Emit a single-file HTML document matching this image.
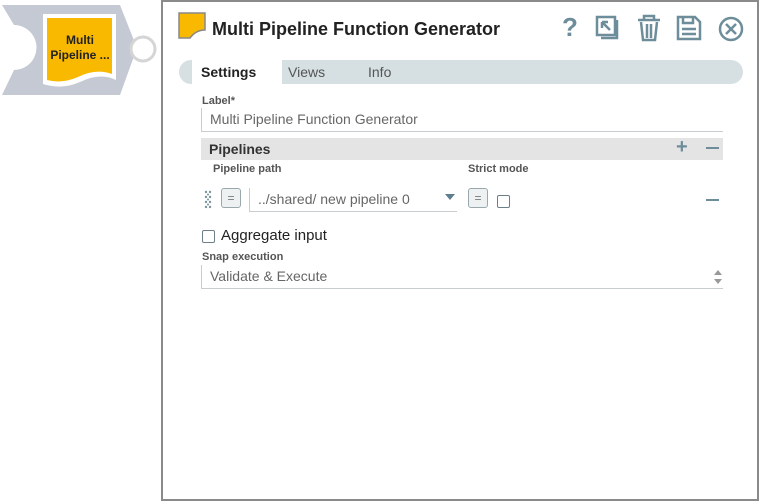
<!DOCTYPE html>
<html><head><style>
body{margin:0;width:762px;height:501px;background:#fff;position:relative;overflow:hidden;font-family:"Liberation Sans",sans-serif;}
.abs{position:absolute}
*{box-sizing:border-box}
.lbl{font-size:11px;font-weight:bold;color:#555}
.inp{border:1px solid #c8cdd0;border-top:none;border-right:none;font-size:14px;color:#666;}
.eq{border:1px solid #9aa7ad;border-radius:3px;background:#eef1f2;width:20px;height:20px;font-size:12px;color:#777;text-align:center;line-height:18px}
.cb{border:1px solid #6d7f88;border-radius:2px;width:13px;height:13px}
</style></head><body>
<svg class="abs" style="left:0;top:0" width="162" height="100">
<path d="M2 5 H120 L137 48 L120 95 H2 L14 70 A22 22 0 0 0 14 25 Z" fill="#c4c9d4"/>
<path d="M0 30 A18 18 0 0 1 0 66 Z" fill="#fff"/>
<path d="M43 14 H116 V80 Q100 72 80 82 Q62 90 43 84 Z" fill="#fff"/>
<path d="M47 18 H112 V74 Q96 68 78 77 Q62 84 47 80 Z" fill="#f9b900"/>
<circle cx="143" cy="49" r="12" fill="#fff" stroke="#d5d5d5" stroke-width="3"/>
<text x="80" y="44" font-size="12" font-weight="bold" text-anchor="middle" fill="#222" font-family="Liberation Sans">Multi</text>
<text x="80" y="59" font-size="12" font-weight="bold" text-anchor="middle" fill="#222" font-family="Liberation Sans">Pipeline ...</text>
</svg>
<div class="abs" style="left:161px;top:0;width:598px;height:501px;border:2px solid #8a8a8a;background:#fff"></div>
<svg class="abs" style="left:178px;top:12px" width="30" height="28"><path d="M1 1 H27 V18 Q18 18 12 26 H1 Z" fill="#f9b900" stroke="#888" stroke-width="1.5"/></svg>
<div class="abs" style="left:212px;top:19px;font-size:18px;font-weight:bold;color:#222">Multi Pipeline Function Generator</div>
<svg class="abs" style="left:555px;top:12px" width="195" height="32" fill="none" stroke="#6e8d9a" stroke-width="2.5">
<text x="7" y="24" font-size="26" font-weight="bold" fill="#6e8d9a" stroke="none" font-family="Liberation Sans">?</text>
<rect x="42" y="5" width="18" height="18"/><path d="M47 10 L55 18 M47 10 H53 M47 10 V16" /><path d="M62 8 V26 H46"/>
<path d="M83 8 H105 M89 8 V4 H99 V8 M86 10 L88 28 H100 L102 10 M92 12 V26 M96 12 V26"/>
<path d="M123 5 H140 L145 10 V27 H123 Z M128 5 V11 H138 V5 M127 17 H141 M127 22 H141"/>
<circle cx="176" cy="17" r="11"/><path d="M171 12 L181 22 M181 12 L171 22"/>
</svg>
<div class="abs" style="left:179px;top:60px;width:564px;height:24px;background:#d6e0e3;border-radius:12px"></div>
<div class="abs" style="left:192px;top:60px;width:90px;height:24px;background:#fff"></div>
<div class="abs" style="left:201px;top:64px;font-size:14px;font-weight:bold;color:#222">Settings</div>
<div class="abs" style="left:288px;top:64px;font-size:14px;color:#555">Views</div>
<div class="abs" style="left:368px;top:64px;font-size:14px;color:#555">Info</div>
<div class="abs lbl" style="left:202px;top:95px">Label*</div>
<div class="abs inp" style="left:201px;top:108px;width:522px;height:24px;padding-left:8px;line-height:22px">Multi Pipeline Function Generator</div>
<div class="abs" style="left:201px;top:138px;width:522px;height:22px;background:#e4e4e4"></div>
<div class="abs" style="left:209px;top:141px;font-size:14px;font-weight:bold;color:#333">Pipelines</div>
<div class="abs" style="left:676px;top:136px;font-size:20px;color:#6e8d9a;font-weight:bold">+</div>
<div class="abs" style="left:706px;top:147px;width:13px;height:2px;background:#6e8d9a"></div>
<div class="abs lbl" style="left:213px;top:163px">Pipeline path</div>
<div class="abs lbl" style="left:468px;top:163px">Strict mode</div>
<svg class="abs" style="left:204px;top:190px" width="12" height="22" fill="#7b93a0"><circle cx="2" cy="2" r="1.2"/><circle cx="6" cy="2" r="1.2"/><circle cx="2" cy="7" r="1.2"/><circle cx="6" cy="7" r="1.2"/><circle cx="2" cy="12" r="1.2"/><circle cx="6" cy="12" r="1.2"/><circle cx="2" cy="17" r="1.2"/><circle cx="6" cy="17" r="1.2"/><circle cx="4" cy="4.5" r="1"/><circle cx="4" cy="9.5" r="1"/><circle cx="4" cy="14.5" r="1"/></svg>
<div class="abs eq" style="left:221px;top:188px">=</div>
<div class="abs inp" style="left:249px;top:188px;width:208px;height:24px;padding-left:8px;line-height:22px">../shared/ new pipeline 0</div>
<div class="abs" style="left:445px;top:194px;width:0;height:0;border-left:5px solid transparent;border-right:5px solid transparent;border-top:6px solid #5d7f8d"></div>
<div class="abs eq" style="left:468px;top:188px">=</div>
<div class="abs cb" style="left:497px;top:195px"></div>
<div class="abs" style="left:706px;top:199px;width:13px;height:2px;background:#6e8d9a"></div>
<div class="abs cb" style="left:202px;top:230px;width:13px;height:13px"></div>
<div class="abs" style="left:221px;top:227px;font-size:15px;color:#222">Aggregate input</div>
<div class="abs lbl" style="left:202px;top:251px">Snap execution</div>
<div class="abs inp" style="left:201px;top:265px;width:522px;height:24px;padding-left:8px;line-height:22px;border-bottom:1px solid #c8cdd0">Validate &amp; Execute</div>
<div class="abs" style="left:714px;top:270px;border-left:4px solid transparent;border-right:4px solid transparent;border-bottom:5px solid #999"></div>
<div class="abs" style="left:714px;top:279px;border-left:4px solid transparent;border-right:4px solid transparent;border-top:5px solid #999"></div>
</body></html>
